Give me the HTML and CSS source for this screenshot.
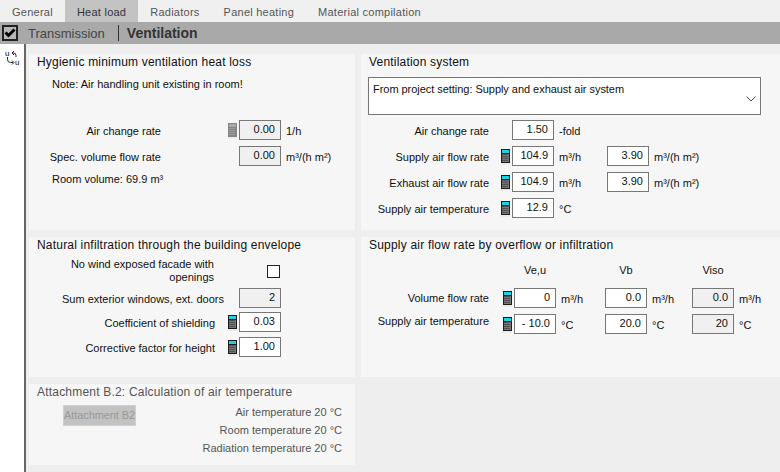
FILE: index.html
```html
<!DOCTYPE html>
<html lang="en">
<head>
    <meta charset="UTF-8">
    <title>Ventilation</title>
    <link rel="stylesheet" href="styles.css">
</head>
<body>
    <svg class="defs" width="0" height="0">
        <symbol id="calc" viewBox="0 0 9 14">
            <rect width="9" height="14" fill="#1c1c1c"/>
            <rect x="1" y="1" width="7" height="3" fill="#19d3e6"/>
            <rect x="1" y="5" width="7" height="8" fill="#777"/>
            <path d="M1.5 5.5h6M1.5 7.5h6M1.5 9.5h6M1.5 11.5h6" stroke="#2a2a2a" stroke-dasharray="1 1"/>
        </symbol>
        <symbol id="calc-off" viewBox="0 0 9 14">
            <rect width="9" height="14" fill="#858585"/>
            <rect x="1" y="1" width="7" height="3" fill="#a9a9a9"/>
            <path d="M1.5 5.5h6M1.5 7.5h6M1.5 9.5h6M1.5 11.5h6" stroke="#b5b5b5" stroke-dasharray="1 1"/>
        </symbol>
    </svg>

    <div class="tabs">
        <div class="tab">General</div>
        <div class="tab active">Heat load</div>
        <div class="tab">Radiators</div>
        <div class="tab">Panel heating</div>
        <div class="tab">Material compilation</div>
    </div>

    <div class="toolbar">
        <span class="check-btn">
            <svg width="12" height="10" viewBox="0 0 12 10"><path d="M1.5 4.500l3 3 6-6" fill="none" stroke="#000" stroke-width="3"/></svg>
        </span>
        <span class="tool-link">Transmission</span>
        <span class="tool-sep"></span>
        <span class="tool-current">Ventilation</span>
    </div>

    <div class="main">
        <div class="rail">
            <svg width="16" height="16" viewBox="0 0 16 16">
                <text x="0" y="6" class="rail-u">u</text>
                <text x="10" y="15" class="rail-u">u</text>
                <path d="M7 3h1.500a2.500 2.500 0 0 1 2.500 2.500V7M2.500 7v2.500a3 3 0 0 0 3 3H8" fill="none" stroke="#222"/>
                <path d="M9 1L7 3l2 2M7 10.500l2 2-2 2" fill="none" stroke="#222"/>
            </svg>
        </div>

        <div class="content">
            <section class="panel">
                <h3>Hygienic minimum ventilation heat loss</h3>
                <p class="note">Note: Air handling unit existing in room!</p>
                <div class="row hygiene first-hygiene">
                    <span class="lbl">Air change rate</span>
                    <svg class="calc"><use href="#calc-off"/></svg>
                    <span class="val ro">0.00</span>
                    <span class="unit">1/h</span>
                </div>
                <div class="row hygiene">
                    <span class="lbl">Spec. volume flow rate</span>
                    <span></span>
                    <span class="val ro">0.00</span>
                    <span class="unit">m³/(h m²)</span>
                </div>
                <p class="note room">Room volume: 69.9 m³</p>
            </section>

            <section class="panel">
                <h3>Ventilation system</h3>
                <div class="select">
                    <span>From project setting: Supply and exhaust air system</span>
                    <svg width="10" height="6" viewBox="0 0 10 6"><path d="M.5 .5L5 5 9.500 .5" fill="none" stroke="#444"/></svg>
                </div>
                <div class="row system">
                    <span class="lbl">Air change rate</span>
                    <span></span>
                    <span class="val">1.50</span>
                    <span class="unit">-fold</span>
                </div>
                <div class="row system">
                    <span class="lbl">Supply air flow rate</span>
                    <svg class="calc"><use href="#calc"/></svg>
                    <span class="val">104.9</span>
                    <span class="unit">m³/h</span>
                    <span class="val">3.90</span>
                    <span class="unit">m³/(h m²)</span>
                </div>
                <div class="row system">
                    <span class="lbl">Exhaust air flow rate</span>
                    <svg class="calc"><use href="#calc"/></svg>
                    <span class="val">104.9</span>
                    <span class="unit">m³/h</span>
                    <span class="val">3.90</span>
                    <span class="unit">m³/(h m²)</span>
                </div>
                <div class="row system">
                    <span class="lbl">Supply air temperature</span>
                    <svg class="calc"><use href="#calc"/></svg>
                    <span class="val">12.9</span>
                    <span class="unit">°C</span>
                </div>
            </section>

            <section class="panel">
                <h3>Natural infiltration through the building envelope</h3>
                <div class="wind">
                    <span class="lbl">No wind exposed facade with<br>openings</span>
                    <span class="box"></span>
                </div>
                <div class="row shield sum">
                    <span class="lbl">Sum exterior windows, ext. doors</span>
                    <span class="val ro">2</span>
                </div>
                <div class="row shield">
                    <span class="lbl">Coefficient of shielding</span>
                    <svg class="calc"><use href="#calc"/></svg>
                    <span class="val">0.03</span>
                </div>
                <div class="row shield">
                    <span class="lbl">Corrective factor for height</span>
                    <svg class="calc"><use href="#calc"/></svg>
                    <span class="val">1.00</span>
                </div>
            </section>

            <section class="panel">
                <h3>Supply air flow rate by overflow or infiltration</h3>
                <div class="heads">
                    <span>Ve,u</span>
                    <span>Vb</span>
                    <span>Viso</span>
                </div>
                <div class="row overflow">
                    <span class="lbl">Volume flow rate</span>
                    <svg class="calc"><use href="#calc"/></svg>
                    <span class="val">0</span>
                    <span class="unit">m³/h</span>
                    <span class="val">0.0</span>
                    <span class="unit">m³/h</span>
                    <span class="val ro">0.0</span>
                    <span class="unit">m³/h</span>
                </div>
                <div class="row overflow">
                    <span class="lbl raised">Supply air temperature</span>
                    <svg class="calc"><use href="#calc"/></svg>
                    <span class="val">- 10.0</span>
                    <span class="unit">°C</span>
                    <span class="val">20.0</span>
                    <span class="unit">°C</span>
                    <span class="val ro">20</span>
                    <span class="unit">°C</span>
                </div>
            </section>

            <section class="panel off">
                <h3>Attachment B.2: Calculation of air temperature</h3>
                <div class="attach">
                    <span class="attach-btn">Attachment B2</span>
                    <div class="temps">
                        <span>Air temperature 20 °C</span>
                        <span>Room temperature 20 °C</span>
                        <span>Radiation temperature 20 °C</span>
                    </div>
                </div>
            </section>
        </div>
    </div>
</body>
</html>
```

FILE: styles.css
```css
html, body {
    margin: 0;
    height: 100%;
    overflow: hidden;
}
body {
    display: flex;
    flex-direction: column;
    background: #eeeeee;
    color: #111;
    font-family: "Liberation Sans", Arial, sans-serif;
    font-size: 11px;
}
.defs {
    display: block;
}
.tabs {
    display: flex;
    height: 22px;
    flex: none;
    background: #f0f0f0;
    color: #555;
    letter-spacing: 0.25px;
}
.tab {
    padding: 0 12px;
    line-height: 24px;
}
.tab.active {
    background: #c3c3c3;
    color: #333;
}
.toolbar {
    display: flex;
    align-items: center;
    height: 22px;
    flex: none;
    background: #a9a9a9;
    font-size: 14px;
}
.check-btn {
    display: flex;
    align-items: center;
    justify-content: center;
    box-sizing: border-box;
    width: 16px;
    height: 16px;
    margin-left: 2px;
    border: 2px solid #222;
    background: #b8b8b8;
}
.tool-link {
    margin-left: 10px;
    font-size: 13px;
    color: #444;
}
.tool-sep {
    width: 1px;
    height: 16px;
    margin: 0 8px 0 13px;
    background: #333;
}
.tool-current {
    font-weight: 700;
    color: #333;
}
.main {
    display: flex;
    flex: 1;
    min-height: 0;
}
.rail {
    box-sizing: border-box;
    width: 26px;
    padding: 6px 0 0 5px;
    flex: none;
    background: #fff;
    border-right: 2px solid #666;
}
.rail-u {
    font-size: 8px;
    fill: #000;
}
.content {
    display: grid;
    grid-template-columns: 326px 419px;
    grid-template-rows: 176px 140px 81px;
    gap: 7px 6px;
    padding: 10px 0 0 3px;
}
.panel {
    box-sizing: border-box;
    padding: 0 8px;
    background: #f6f6f6;
}
.panel h3 {
    margin: 0;
    font-size: 12px;
    font-weight: 400;
    line-height: 17px;
    letter-spacing: 0.2px;
}
.note {
    margin: 5px 0 0 15px;
    line-height: 16px;
}
.note.room {
    margin-top: 5px;
}
.row {
    display: grid;
    align-items: center;
    height: 20px;
    margin-top: 6px;
}
.lbl,
.unit {
    padding-top: 2px;
}
.lbl {
    text-align: right;
    white-space: nowrap;
}
.lbl.raised {
    position: relative;
    top: -3px;
}
.val {
    box-sizing: border-box;
    height: 20px;
    padding: 0 5px 0 0;
    line-height: 17px;
    text-align: right;
    background: #fff;
    border: 1px solid #777;
}
.val.ro {
    background: #f0f0f0;
}
.unit {
    padding-left: 5px;
    white-space: nowrap;
}
.calc {
    width: 9px;
    height: 14px;
    justify-self: end;
    margin-right: 2px;
    background: #e8e8e8;
    box-shadow: 0 2px 0 #ececec;
}
.hygiene {
    grid-template-columns: 124px 78px 42px auto;
}
.first-hygiene {
    margin-top: 28px;
}
.select {
    display: flex;
    justify-content: space-between;
    box-sizing: border-box;
    width: 393px;
    height: 38px;
    margin: 6px 0 0 -1px;
    padding: 5px 4px;
    letter-spacing: -0.04px;
    background: #fff;
    border: 1px solid #777;
}
.select svg {
    align-self: center;
    margin-top: 5px;
}
.system {
    grid-template-columns: 120px 23px 42px 53px 42px auto;
}
.select + .system {
    margin-top: 5px;
}
.wind {
    display: flex;
    align-items: center;
    margin-top: 4px;
}
.wind .lbl {
    width: 177px;
    padding-top: 0;
    line-height: 13px;
}
.box {
    box-sizing: border-box;
    width: 13px;
    height: 13px;
    margin-left: 53px;
    background: #fff;
    border: 1px solid #222;
}
.shield {
    grid-template-columns: 178px 24px 42px;
    margin-top: 4px;
}
.shield.sum {
    grid-template-columns: 187px 15px 42px;
    margin-top: 4px;
}
.shield.sum .val {
    grid-column: 3;
    background: #f0f0f0;
}
.shield:last-child {
    margin-top: 5px;
}
.heads {
    display: grid;
    grid-template-columns: 145px 42px 49px 42px 45px 42px;
    margin-top: 8px;
    line-height: 16px;
    text-align: center;
}
.heads span:nth-child(1) { grid-column: 2; }
.heads span:nth-child(2) { grid-column: 4; }
.heads span:nth-child(3) { grid-column: 6; }
.overflow {
    grid-template-columns: 120px 25px 42px 49px 42px 45px 42px auto;
}
.overflow .lbl {
    padding-top: 0;
}
.heads + .overflow {
    margin-top: 10px;
}
.off {
    color: #555;
}
.attach {
    display: grid;
    grid-template-columns: 73px 1fr;
    padding-left: 26px;
    padding-right: 5px;
    margin-top: 4px;
}
.attach-btn {
    height: 21px;
    line-height: 19px;
    text-align: center;
    color: #999;
    background: #c2c2c2;
    border: 1px solid #d0d0d0;
    box-sizing: border-box;
    white-space: nowrap;
    letter-spacing: -0.1px;
}
.temps {
    display: flex;
    flex-direction: column;
    align-items: flex-end;
    margin-top: -2px;
    line-height: 18px;
}
```
